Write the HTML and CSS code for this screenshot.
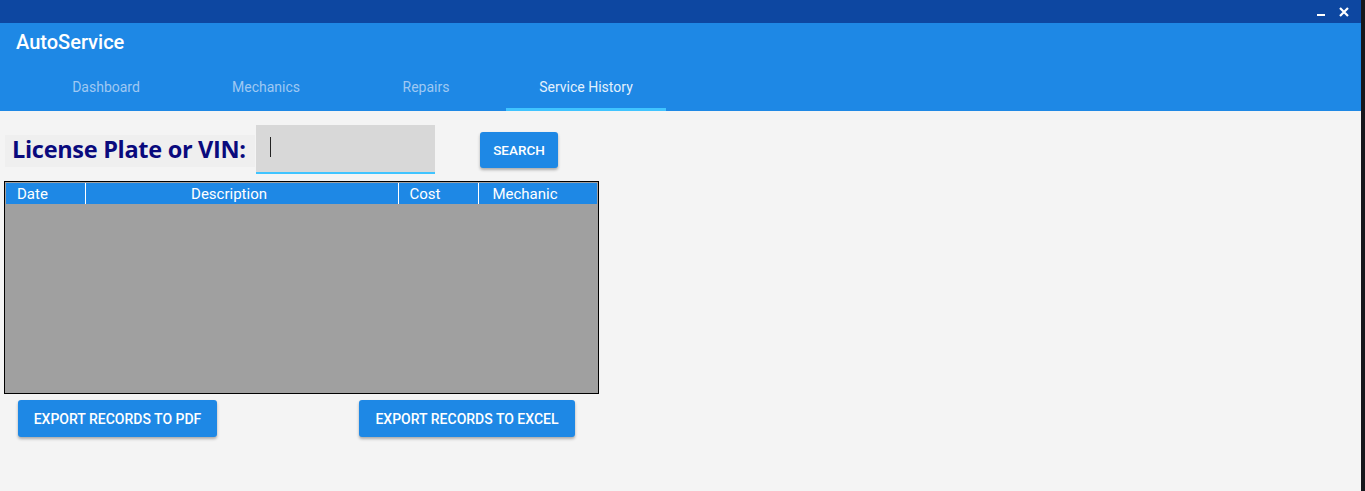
FILE: index.html
```html
<!DOCTYPE html>
<html>
<head>
<meta charset="utf-8">
<link rel="stylesheet" href="styles.css">
</head>
<body>
<div class="screen">
  <div class="app">
    <div class="titlebar">
      <span class="win-btn min"></span>
      <span class="win-btn close">
        <svg width="10" height="10" viewBox="0 0 10 10"><path d="M1 1L9 9M9 1L1 9" stroke="#fff" stroke-width="2.2"/></svg>
      </span>
    </div>
    <header class="appbar">
      <div class="brand">AutoService</div>
      <nav class="tabs">
        <div class="tab">Dashboard</div>
        <div class="tab">Mechanics</div>
        <div class="tab">Repairs</div>
        <div class="tab active">Service History</div>
      </nav>
    </header>
    <main class="content">
      <div class="search-row">
        <div class="label">License Plate or VIN:</div>
        <div class="input"><span class="caret"></span></div>
        <button class="btn search">SEARCH</button>
      </div>
      <div class="table">
        <div class="thead">
          <div class="th c-date">Date</div>
          <div class="th c-desc">Description</div>
          <div class="th c-cost">Cost</div>
          <div class="th c-mech">Mechanic</div>
        </div>
        <div class="tbody"></div>
      </div>
      <div class="actions">
        <button class="btn pdf">EXPORT RECORDS TO PDF</button>
        <button class="btn excel">EXPORT RECORDS TO EXCEL</button>
      </div>
    </main>
  </div>
  <div class="edge"></div>
</div>
</body>
</html>
```

FILE: styles.css
```css
* { box-sizing: border-box; }
html, body { margin: 0; padding: 0; }
body {
  width: 1365px;
  height: 491px;
  overflow: hidden;
  font-family: Roboto, "Liberation Sans", sans-serif;
  background: #f4f4f4;
}
.screen { display: flex; height: 491px; }
.app { width: 1361px; display: flex; flex-direction: column; background: #f4f4f4; }
.edge { width: 4px; background: #15171c; }

.titlebar {
  height: 23px;
  background: #0d47a1;
  display: flex;
  justify-content: flex-end;
  align-items: center;
  padding-right: 12px;
  gap: 12px;
}
.win-btn { display: flex; align-items: center; justify-content: center; width: 11px; height: 11px; }
.win-btn.min::after { content: ""; width: 8px; height: 2px; background: #fff; margin-top: 6px; }

.appbar {
  height: 88px;
  background: #1e88e5;
  display: flex;
  flex-direction: column;
}
.brand {
  color: #fff;
  font-size: 20px;
  font-weight: 500;
  padding: 7px 0 0 16px;
  height: 44px;
}
.tabs { display: flex; padding-left: 26px; height: 44px; }
.tab {
  width: 160px;
  text-align: center;
  color: #9fc8f3;
  font-size: 14px;
  padding-top: 12px;
  border-bottom: 3px solid transparent;
}
.tab.active { color: #e3f1fd; border-bottom-color: #40c4ff; }

.content { padding: 14px 0 0 4px; }
.search-row { display: flex; align-items: center; height: 49px; }
.label {
  margin-left: 1px;
  background: #efefef;
  height: 32px;
  width: 250px;
  padding-left: 7px;
  font-family: "Open Sans", "DejaVu Sans", sans-serif;
  font-weight: 700;
  font-size: 23.5px;
  line-height: 29px;
  color: #0a0a7d;
  letter-spacing: -0.3px;
  margin-top: 2px;
  white-space: nowrap;
}
.input {
  width: 179px;
  height: 49px;
  background: #d8d8d8;
  border-bottom: 2px solid #40c4ff;
  margin-left: 1px;
  padding: 12px 0 0 14px;
}
.caret { display: block; width: 1px; height: 20px; background: #222; }
.btn {
  background: #1e88e5;
  color: #fff;
  border: none;
  border-radius: 3px;
  font-family: Roboto, "Liberation Sans", sans-serif;
  font-weight: 500;
  font-size: 14px;
  box-shadow: 0 2px 3px rgba(0,0,0,0.3);
  padding: 0;
}
.search { width: 78px; height: 36px; margin-left: 45px; margin-top: 1px; font-size: 13.5px; }

.table {
  margin-top: 7px;
  width: 595px;
  height: 213px;
  border: 1px solid #000;
  display: flex;
  flex-direction: column;
  padding: 1px 1px 0;
  background: #a0a0a0;
}
.thead { display: flex; height: 21px; background: #1e88e5; color: #fff; font-size: 15px; line-height: 22px; padding-top: 1px; }
.th { border-right: 1px solid #fff; text-align: center; margin-top: -1px; }
.c-date { width: 80px; text-align: left; padding-left: 11px; }
.c-desc { width: 313px; padding-right: 26px; }
.c-cost { width: 80px; padding-right: 27px; }
.c-mech { flex: 1; border-right: none; padding-right: 26px; }
.tbody { flex: 1; background: #a0a0a0; }

.actions { display: flex; padding-left: 14px; margin-top: 6px; }
.pdf { width: 199px; height: 37px; }
.excel { width: 216px; height: 37px; margin-left: 142px; }
```
